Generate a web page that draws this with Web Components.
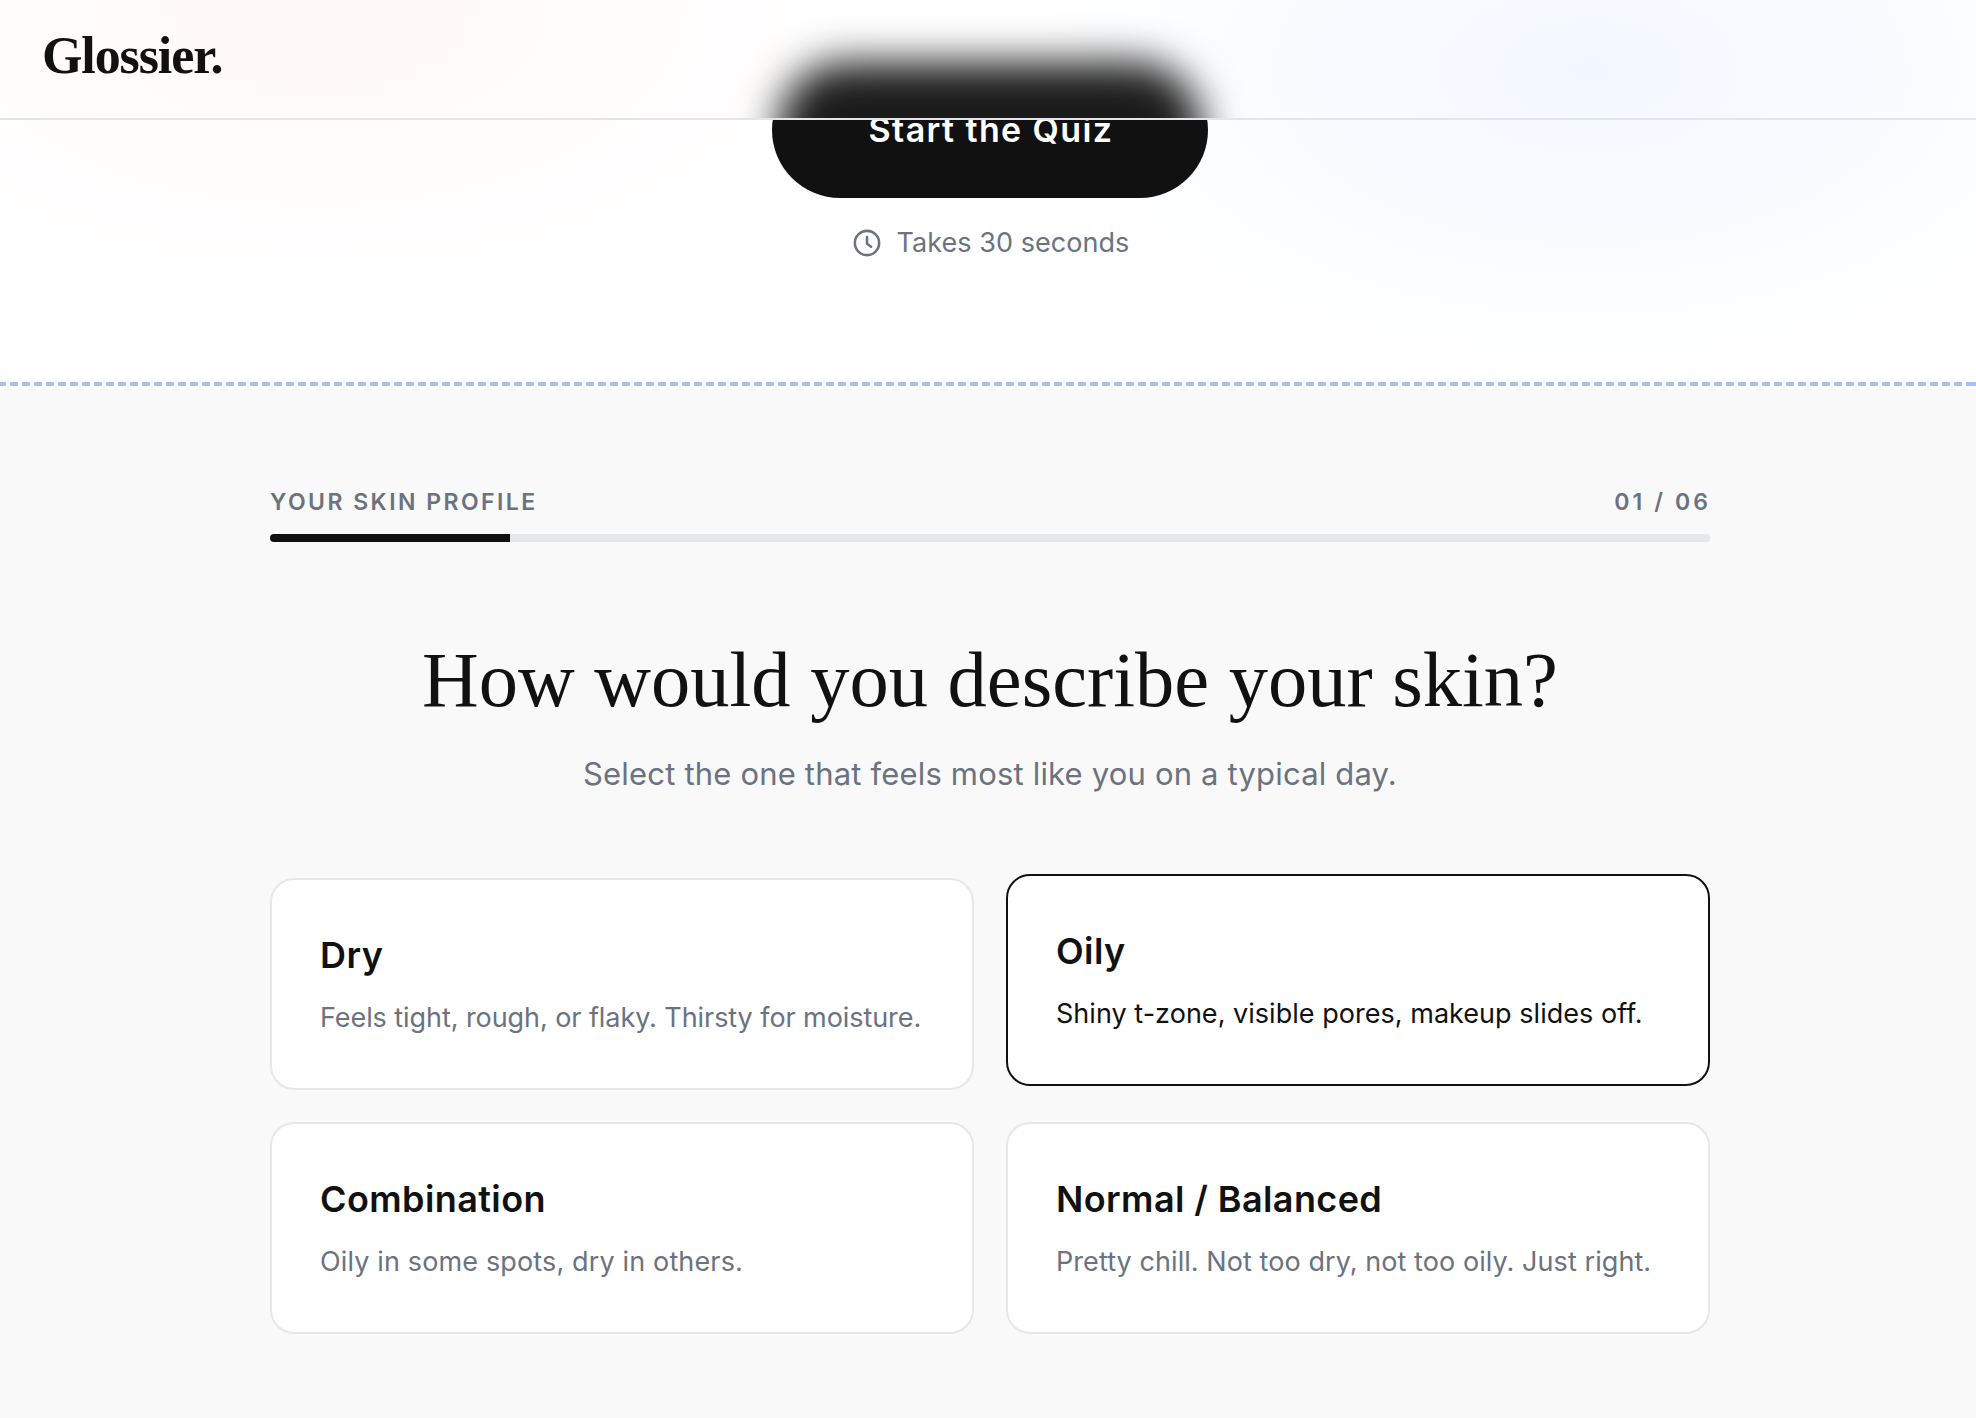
<!DOCTYPE html>
<html><head><meta charset="utf-8"><style>
html,body{margin:0;padding:0;background:#fff}
body{width:1976px;height:1418px;overflow:hidden;font-family:Inter,"Liberation Sans",sans-serif;color:#111;--tint:radial-gradient(ellipse 560px 300px at 320px 10px,rgba(255,235,230,.28),transparent 100%),radial-gradient(ellipse 560px 310px at 1590px 70px,rgba(225,238,255,.4),transparent 100%),#fff}
</style></head><body>
<gl-header>Glossier.</gl-header>
<gl-hero></gl-hero>
<gl-quiz label="YOUR SKIN PROFILE" step="01 / 06" question="How would you describe your skin?" sub="Select the one that feels most like you on a typical day.">
<gl-option style="--ls:-.07px" title="Dry" desc="Feels tight, rough, or flaky. Thirsty for moisture."></gl-option>
<gl-option style="--ls:.03px" selected title="Oily" desc="Shiny t-zone, visible pores, makeup slides off."></gl-option>
<gl-option style="--ls:.14px" title="Combination" desc="Oily in some spots, dry in others."></gl-option>
<gl-option style="--ls:.07px" title="Normal / Balanced" desc="Pretty chill. Not too dry, not too oily. Just right."></gl-option>
</gl-quiz>
<script>
class GlHeader extends HTMLElement{constructor(){super();this.attachShadow({mode:'open'}).innerHTML=`<style>
:host{display:flex;align-items:center;position:absolute;z-index:5;top:0;left:0;width:1976px;height:118px;box-sizing:content-box;border-bottom:2px solid #e4e5ea;background:var(--tint);overflow:hidden}
.ghost{position:absolute;left:778px;top:62px;width:424px;height:220px;border-radius:68px 68px 0 0;background:#1b1b1b;filter:blur(20px)}
span{position:relative;margin-left:42px;margin-bottom:7px;font:700 52px/1 "Liberation Serif",serif;letter-spacing:-1.1px;color:#111}
</style><div class="ghost"></div><span><slot></slot></span>`}}
customElements.define('gl-header',GlHeader);
class GlHero extends HTMLElement{constructor(){super();this.attachShadow({mode:'open'}).innerHTML=`<style>
:host{display:flex;flex-direction:column;align-items:center;box-sizing:border-box;height:382px;padding:62px 0 0 4px;background:var(--tint)}
button{width:436px;height:136px;border:0;border-radius:68px;background:#111;color:#fff;font:600 34px/1 Inter,sans-serif;letter-spacing:1.4px;text-indent:2px;flex:none}
p{display:flex;align-items:center;gap:16px;margin:26px 0 0 2px;color:#6b7280;font:400 27px/38px Inter,sans-serif;letter-spacing:.05px}
svg{width:28px;height:28px;flex:none}
</style><button>Start the Quiz</button><p><svg viewBox="0 0 24 24" fill="none" stroke="#6b7280" stroke-width="2.2" stroke-linecap="round" stroke-linejoin="round"><circle cx="12" cy="12" r="10.4"/><path d="M12 6.8V12.6l3.5 2.6"/></svg><span>Takes 30 seconds</span></p>`}}
customElements.define('gl-hero',GlHero);
class GlQuiz extends HTMLElement{constructor(){super();const a=n=>this.getAttribute(n);this.attachShadow({mode:'open'}).innerHTML=`<style>
:host{display:block;height:1036px;box-sizing:border-box;background:#f9f9f9}
.dash{height:4px;border-bottom:3px solid #fff;background:repeating-linear-gradient(90deg,#a9bff0 0 8px,#fff 8px 12px) -2px 0}
.wrap{width:1440px;margin-left:270px;padding-top:98px}
.top{display:flex;justify-content:space-between;color:#6b7280;font:600 23px/30px Inter,sans-serif;letter-spacing:2.45px}
.top span+span{letter-spacing:3.1px;margin-right:-1px}
.bar{height:8px;margin-top:17px;border-radius:4px;background:#e5e7eb;overflow:hidden}
.bar i{display:block;width:240px;height:100%;background:#111}
h1{margin:93px 0 0;text-align:center;font:400 78.5px/90px "Liberation Serif",serif;color:#111}
.sub{margin:29px 0 0;text-align:center;color:#6b7280;font:400 31px/40px Inter,sans-serif;letter-spacing:.18px}
.grid{display:grid;grid-template-columns:704px 704px;gap:32px;margin-top:84px}
</style><div class="dash"></div><div class="wrap"><div class="top"><span>${a('label')}</span><span>${a('step')}</span></div><div class="bar"><i></i></div><h1>${a('question')}</h1><p class="sub">${a('sub')}</p><div class="grid"><slot></slot></div></div>`}}
customElements.define('gl-quiz',GlQuiz);
class GlOption extends HTMLElement{constructor(){super();const a=n=>this.getAttribute(n);const s=this.hasAttribute('selected');this.attachShadow({mode:'open'}).innerHTML=`<style>
:host{display:flex;flex-direction:column;box-sizing:border-box;height:212px;padding:53px 48px 0;border:2px solid ${s?'#111':'#e5e7eb'};border-radius:24px;background:#fff;${s?'transform:translateY(-4px);':''}}
b{font:600 36px/44px Inter,sans-serif;color:#111;letter-spacing:.4px}
span{margin-top:22px;font:400 27px/38px Inter,sans-serif;white-space:nowrap;letter-spacing:var(--ls,0);color:${s?'#111':'#6b7280'}}
</style><b>${a('title')}</b><span>${a('desc')}</span>`}}
customElements.define('gl-option',GlOption);
</script></body></html>
